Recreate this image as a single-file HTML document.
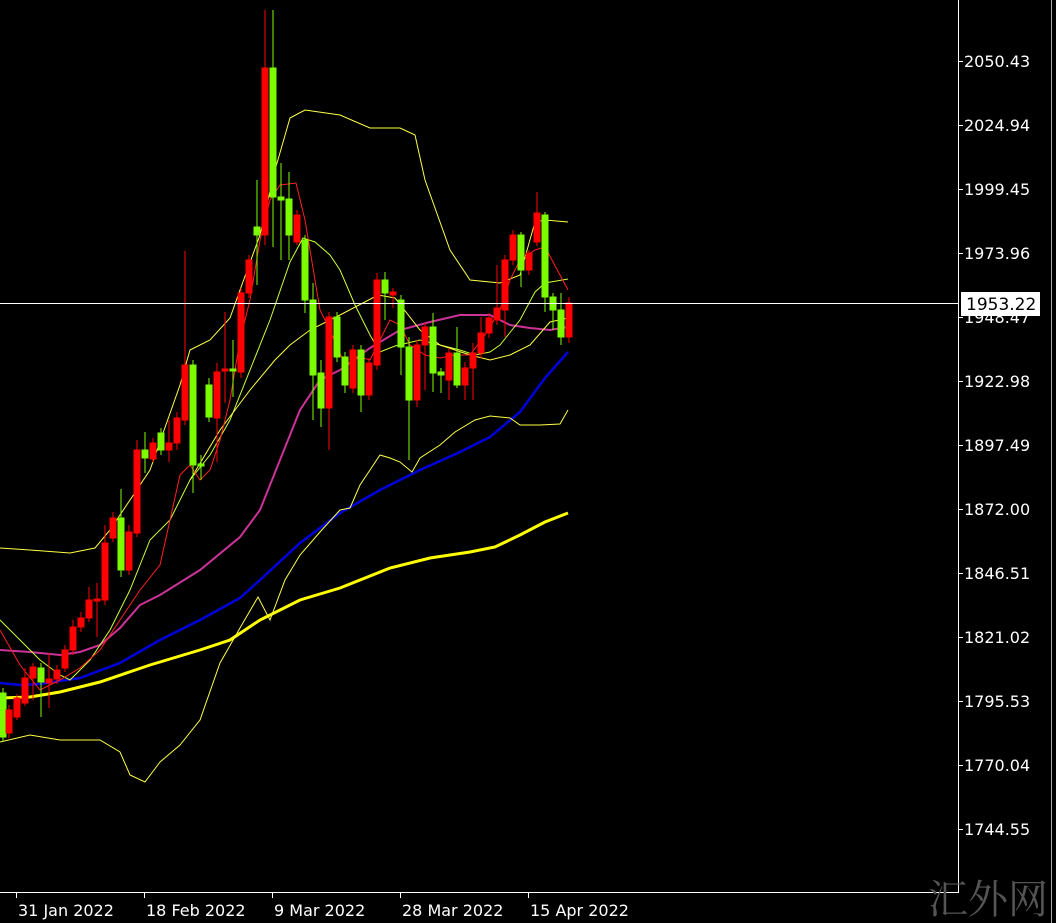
<!DOCTYPE html>
<html><head><meta charset="utf-8"><style>
html,body{margin:0;padding:0;background:#000;width:1056px;height:923px;overflow:hidden}
svg{display:block}
.t{font-family:"DejaVu Sans","Liberation Sans",sans-serif;font-size:16px;fill:#fff}
</style></head><body>
<svg width="1056" height="923" viewBox="0 0 1056 923" xmlns="http://www.w3.org/2000/svg">
<rect width="1056" height="923" fill="#000"/>
<!-- lines -->
<polyline fill="none" stroke="#ffff00" stroke-width="3" points="0,698 30,697 60,692 100,682 150,665 200,650 230,640 260,620 300,600 340,588 390,568 430,558 470,552 495,547 520,535 545,522 568,513"/>
<polyline fill="none" stroke="#0000dd" stroke-width="2.5" points="0,683 20,685 40,684 80,678 120,663 160,640 200,620 240,598 260,580 300,543 340,513 380,490 420,470 460,452 490,437 520,412 545,378 568,352"/>
<polyline fill="none" stroke="#cc3399" stroke-width="2" points="0,650 30,652 60,655 80,652 100,645 120,628 140,605 160,595 200,570 240,537 260,510 280,460 300,410 320,380 340,370 370,348 400,330 430,322 460,315 490,315 510,325 530,328 550,330 568,327"/>
<polyline fill="none" stroke="#ffff44" stroke-width="1" points="0,548 30,550 70,553 95,548 110,530 150,470 180,385 190,350 210,340 230,318 240,290 260,235 275,170 290,118 305,110 340,115 370,128 400,128 415,135 425,180 450,250 470,280 500,283 520,275 535,222 545,220 568,222"/>
<polyline fill="none" stroke="#ffff44" stroke-width="1" points="0,742 30,735 60,740 100,740 120,752 130,775 145,782 160,762 180,745 200,720 220,663 240,628 258,597 270,620 285,580 300,555 320,532 340,510 350,508 360,485 370,470 380,455 390,458 400,462 412,472 420,458 440,445 455,432 475,420 490,416 510,418 520,425 540,425 560,424 568,410"/>
<polyline fill="none" stroke="#ccff33" stroke-width="1" points="0,620 20,640 40,660 60,675 70,680 90,660 110,630 130,590 150,540 170,520 190,480 210,455 230,420 250,370 270,320 290,262 303,238 315,242 330,255 340,270 355,305 370,335 380,352 395,346 420,340 440,345 460,350 475,355 490,352 500,345 520,320 535,292 545,283 568,279"/>
<polyline fill="none" stroke="#ffff44" stroke-width="1" points="190,480 220,430 250,390 275,360 290,345 310,330 340,315 378,295 395,298 420,330 440,345 470,355 490,360 510,355 530,345 550,322 568,318"/>
<polyline fill="none" stroke="#ff2020" stroke-width="1" points="0,630 20,665 40,690 60,680 80,668 100,650 120,620 140,590 160,565 180,475 190,465 200,480 210,470 220,440 230,400 240,340 250,300 260,240 270,200 280,185 296,183 305,220 320,310 330,330 345,365 360,357 370,360 380,340 390,320 400,325 410,345 425,355 440,358 455,355 470,355 485,335 500,310 510,280 520,260 535,250 545,247 560,275 568,290"/>
<!-- candles -->
<g id="c" stroke-width="1">
<g stroke="#7cfc00" fill="#7cfc00"><line x1="3" y1="688" x2="3" y2="742"/><rect x="0" y="693" width="6" height="44"/></g>
<g stroke="#ff0000" fill="#ff0000"><line x1="9" y1="705" x2="9" y2="738"/><rect x="6" y="710" width="6" height="23"/></g>
<g stroke="#ff0000" fill="#ff0000"><line x1="17" y1="694" x2="17" y2="720"/><rect x="14" y="698" width="6" height="19"/></g>
<g stroke="#ff0000" fill="#ff0000"><line x1="25" y1="668" x2="25" y2="706"/><rect x="22" y="678" width="6" height="25"/></g>
<g stroke="#ff0000" fill="#ff0000"><line x1="33" y1="663" x2="33" y2="700"/><rect x="30" y="667" width="6" height="11"/></g>
<g stroke="#7cfc00" fill="#7cfc00"><line x1="41" y1="663" x2="41" y2="717"/><rect x="38" y="668" width="6" height="14"/></g>
<g stroke="#ff0000" fill="#ff0000"><line x1="49" y1="653" x2="49" y2="708"/><rect x="46" y="679" width="6" height="4"/></g>
<g stroke="#ff0000" fill="#ff0000"><line x1="57" y1="665" x2="57" y2="684"/><rect x="54" y="670" width="6" height="9"/></g>
<g stroke="#ff0000" fill="#ff0000"><line x1="65" y1="645" x2="65" y2="672"/><rect x="62" y="650" width="6" height="18"/></g>
<g stroke="#ff0000" fill="#ff0000"><line x1="73" y1="620" x2="73" y2="655"/><rect x="70" y="627" width="6" height="23"/></g>
<g stroke="#ff0000" fill="#ff0000"><line x1="81" y1="612" x2="81" y2="632"/><rect x="78" y="618" width="6" height="9"/></g>
<g stroke="#ff0000" fill="#ff0000"><line x1="89" y1="587" x2="89" y2="622"/><rect x="86" y="600" width="6" height="18"/></g>
<g stroke="#ff0000" fill="#ff0000"><line x1="97" y1="583" x2="97" y2="637"/><rect x="94" y="599" width="6" height="2"/></g>
<g stroke="#ff0000" fill="#ff0000"><line x1="105" y1="525" x2="105" y2="605"/><rect x="102" y="543" width="6" height="57"/></g>
<g stroke="#ff0000" fill="#ff0000"><line x1="113" y1="512" x2="113" y2="542"/><rect x="110" y="518" width="6" height="20"/></g>
<g stroke="#7cfc00" fill="#7cfc00"><line x1="121" y1="489" x2="121" y2="577"/><rect x="118" y="518" width="6" height="52"/></g>
<g stroke="#ff0000" fill="#ff0000"><line x1="129" y1="525" x2="129" y2="575"/><rect x="126" y="532" width="6" height="38"/></g>
<g stroke="#ff0000" fill="#ff0000"><line x1="137" y1="440" x2="137" y2="537"/><rect x="134" y="450" width="6" height="83"/></g>
<g stroke="#7cfc00" fill="#7cfc00"><line x1="145" y1="432" x2="145" y2="473"/><rect x="142" y="450" width="6" height="8"/></g>
<g stroke="#ff0000" fill="#ff0000"><line x1="153" y1="438" x2="153" y2="462"/><rect x="150" y="443" width="6" height="16"/></g>
<g stroke="#7cfc00" fill="#7cfc00"><line x1="161" y1="428" x2="161" y2="455"/><rect x="158" y="433" width="6" height="17"/></g>
<g stroke="#ff0000" fill="#ff0000"><line x1="169" y1="420" x2="169" y2="462"/><rect x="166" y="443" width="6" height="7"/></g>
<g stroke="#ff0000" fill="#ff0000"><line x1="177" y1="412" x2="177" y2="450"/><rect x="174" y="418" width="6" height="25"/></g>
<g stroke="#ff0000" fill="#ff0000"><line x1="185" y1="251" x2="185" y2="425"/><rect x="182" y="365" width="6" height="55"/></g>
<g stroke="#7cfc00" fill="#7cfc00"><line x1="193" y1="360" x2="193" y2="493"/><rect x="190" y="365" width="6" height="100"/></g>
<g stroke="#7cfc00" fill="#7cfc00"><line x1="201" y1="455" x2="201" y2="480"/><rect x="198" y="464" width="6" height="2"/></g>
<g stroke="#7cfc00" fill="#7cfc00"><line x1="209" y1="378" x2="209" y2="422"/><rect x="206" y="385" width="6" height="32"/></g>
<g stroke="#ff0000" fill="#ff0000"><line x1="217" y1="363" x2="217" y2="462"/><rect x="214" y="372" width="6" height="46"/></g>
<g stroke="#ff0000" fill="#ff0000"><line x1="225" y1="312" x2="225" y2="403"/><rect x="222" y="369" width="6" height="2"/></g>
<g stroke="#7cfc00" fill="#7cfc00"><line x1="233" y1="340" x2="233" y2="397"/><rect x="230" y="369" width="6" height="2"/></g>
<g stroke="#ff0000" fill="#ff0000"><line x1="241" y1="288" x2="241" y2="378"/><rect x="238" y="293" width="6" height="79"/></g>
<g stroke="#ff0000" fill="#ff0000"><line x1="249" y1="255" x2="249" y2="298"/><rect x="246" y="260" width="6" height="33"/></g>
<g stroke="#7cfc00" fill="#7cfc00"><line x1="257" y1="180" x2="257" y2="285"/><rect x="254" y="227" width="6" height="8"/></g>
<g stroke="#ff0000" fill="#ff0000"><line x1="265" y1="10" x2="265" y2="245"/><rect x="262" y="68" width="6" height="167"/></g>
<g stroke="#7cfc00" fill="#7cfc00"><line x1="273" y1="10" x2="273" y2="247"/><rect x="270" y="68" width="6" height="129"/></g>
<g stroke="#7cfc00" fill="#7cfc00"><line x1="281" y1="163" x2="281" y2="260"/><rect x="278" y="197" width="6" height="3"/></g>
<g stroke="#7cfc00" fill="#7cfc00"><line x1="289" y1="172" x2="289" y2="260"/><rect x="286" y="199" width="6" height="36"/></g>
<g stroke="#ff0000" fill="#ff0000"><line x1="297" y1="210" x2="297" y2="245"/><rect x="294" y="215" width="6" height="27"/></g>
<g stroke="#7cfc00" fill="#7cfc00"><line x1="305" y1="235" x2="305" y2="313"/><rect x="302" y="240" width="6" height="60"/></g>
<g stroke="#7cfc00" fill="#7cfc00"><line x1="313" y1="283" x2="313" y2="420"/><rect x="310" y="300" width="6" height="75"/></g>
<g stroke="#7cfc00" fill="#7cfc00"><line x1="321" y1="360" x2="321" y2="427"/><rect x="318" y="373" width="6" height="35"/></g>
<g stroke="#ff0000" fill="#ff0000"><line x1="329" y1="312" x2="329" y2="450"/><rect x="326" y="317" width="6" height="91"/></g>
<g stroke="#7cfc00" fill="#7cfc00"><line x1="337" y1="312" x2="337" y2="362"/><rect x="334" y="317" width="6" height="40"/></g>
<g stroke="#7cfc00" fill="#7cfc00"><line x1="345" y1="352" x2="345" y2="393"/><rect x="342" y="357" width="6" height="28"/></g>
<g stroke="#ff0000" fill="#ff0000"><line x1="353" y1="345" x2="353" y2="393"/><rect x="350" y="350" width="6" height="38"/></g>
<g stroke="#7cfc00" fill="#7cfc00"><line x1="361" y1="345" x2="361" y2="412"/><rect x="358" y="350" width="6" height="45"/></g>
<g stroke="#ff0000" fill="#ff0000"><line x1="369" y1="358" x2="369" y2="400"/><rect x="366" y="363" width="6" height="32"/></g>
<g stroke="#ff0000" fill="#ff0000"><line x1="377" y1="273" x2="377" y2="370"/><rect x="374" y="280" width="6" height="85"/></g>
<g stroke="#7cfc00" fill="#7cfc00"><line x1="385" y1="272" x2="385" y2="320"/><rect x="382" y="280" width="6" height="13"/></g>
<g stroke="#ff0000" fill="#ff0000"><line x1="393" y1="288" x2="393" y2="308"/><rect x="390" y="292" width="6" height="3"/></g>
<g stroke="#7cfc00" fill="#7cfc00"><line x1="401" y1="295" x2="401" y2="375"/><rect x="398" y="300" width="6" height="47"/></g>
<g stroke="#7cfc00" fill="#7cfc00"><line x1="409" y1="337" x2="409" y2="460"/><rect x="406" y="347" width="6" height="53"/></g>
<g stroke="#ff0000" fill="#ff0000"><line x1="417" y1="340" x2="417" y2="407"/><rect x="414" y="345" width="6" height="55"/></g>
<g stroke="#ff0000" fill="#ff0000"><line x1="425" y1="322" x2="425" y2="390"/><rect x="422" y="327" width="6" height="18"/></g>
<g stroke="#7cfc00" fill="#7cfc00"><line x1="433" y1="313" x2="433" y2="392"/><rect x="430" y="327" width="6" height="46"/></g>
<g stroke="#7cfc00" fill="#7cfc00"><line x1="441" y1="368" x2="441" y2="393"/><rect x="438" y="372" width="6" height="3"/></g>
<g stroke="#ff0000" fill="#ff0000"><line x1="449" y1="348" x2="449" y2="400"/><rect x="446" y="353" width="6" height="27"/></g>
<g stroke="#7cfc00" fill="#7cfc00"><line x1="457" y1="327" x2="457" y2="388"/><rect x="454" y="353" width="6" height="32"/></g>
<g stroke="#ff0000" fill="#ff0000"><line x1="465" y1="362" x2="465" y2="400"/><rect x="462" y="368" width="6" height="17"/></g>
<g stroke="#ff0000" fill="#ff0000"><line x1="473" y1="343" x2="473" y2="400"/><rect x="470" y="353" width="6" height="15"/></g>
<g stroke="#ff0000" fill="#ff0000"><line x1="481" y1="317" x2="481" y2="358"/><rect x="478" y="333" width="6" height="20"/></g>
<g stroke="#ff0000" fill="#ff0000"><line x1="489" y1="313" x2="489" y2="338"/><rect x="486" y="318" width="6" height="15"/></g>
<g stroke="#ff0000" fill="#ff0000"><line x1="497" y1="265" x2="497" y2="325"/><rect x="494" y="308" width="6" height="12"/></g>
<g stroke="#ff0000" fill="#ff0000"><line x1="505" y1="255" x2="505" y2="337"/><rect x="502" y="260" width="6" height="50"/></g>
<g stroke="#ff0000" fill="#ff0000"><line x1="513" y1="230" x2="513" y2="265"/><rect x="510" y="235" width="6" height="25"/></g>
<g stroke="#7cfc00" fill="#7cfc00"><line x1="521" y1="232" x2="521" y2="287"/><rect x="518" y="235" width="6" height="35"/></g>
<g stroke="#ff0000" fill="#ff0000"><line x1="529" y1="250" x2="529" y2="275"/><rect x="526" y="253" width="6" height="17"/></g>
<g stroke="#ff0000" fill="#ff0000"><line x1="537" y1="192" x2="537" y2="246"/><rect x="534" y="213" width="6" height="29"/></g>
<g stroke="#7cfc00" fill="#7cfc00"><line x1="545" y1="212" x2="545" y2="312"/><rect x="542" y="215" width="6" height="82"/></g>
<g stroke="#7cfc00" fill="#7cfc00"><line x1="553" y1="293" x2="553" y2="330"/><rect x="550" y="297" width="6" height="13"/></g>
<g stroke="#7cfc00" fill="#7cfc00"><line x1="561" y1="293" x2="561" y2="345"/><rect x="558" y="310" width="6" height="27"/></g>
<g stroke="#ff0000" fill="#ff0000"><line x1="569" y1="297" x2="569" y2="343"/><rect x="566" y="303" width="6" height="34"/></g>
</g>
<!-- current price line -->
<line x1="0" y1="303.5" x2="958" y2="303.5" stroke="#fff" stroke-width="1"/>
<!-- axes -->
<line x1="958.5" y1="0" x2="958.5" y2="893" stroke="#fff" stroke-width="1"/>
<line x1="0" y1="892.5" x2="958" y2="892.5" stroke="#fff" stroke-width="1"/>
<line x1="1051.5" y1="0" x2="1051.5" y2="923" stroke="#aaa" stroke-width="1"/>
<g stroke="#fff">
<line x1="958" y1="61.5" x2="963" y2="61.5"/><line x1="958" y1="125.5" x2="963" y2="125.5"/><line x1="958" y1="189.5" x2="963" y2="189.5"/><line x1="958" y1="253.5" x2="963" y2="253.5"/><line x1="958" y1="317.5" x2="963" y2="317.5"/><line x1="958" y1="381.5" x2="963" y2="381.5"/><line x1="958" y1="445.5" x2="963" y2="445.5"/><line x1="958" y1="509.5" x2="963" y2="509.5"/><line x1="958" y1="573.5" x2="963" y2="573.5"/><line x1="958" y1="637.5" x2="963" y2="637.5"/><line x1="958" y1="701.5" x2="963" y2="701.5"/><line x1="958" y1="765.5" x2="963" y2="765.5"/><line x1="958" y1="829.5" x2="963" y2="829.5"/>
<line x1="16.5" y1="892" x2="16.5" y2="898"/><line x1="144.5" y1="892" x2="144.5" y2="898"/><line x1="272.5" y1="892" x2="272.5" y2="898"/><line x1="400.5" y1="892" x2="400.5" y2="898"/><line x1="528.5" y1="892" x2="528.5" y2="898"/>
</g>
<g class="t">
<text x="964" y="67">2050.43</text><text x="964" y="131">2024.94</text><text x="964" y="195">1999.45</text><text x="964" y="259">1973.96</text><text x="964" y="323">1948.47</text><text x="964" y="387">1922.98</text><text x="964" y="451">1897.49</text><text x="964" y="515">1872.00</text><text x="964" y="579">1846.51</text><text x="964" y="643">1821.02</text><text x="964" y="707">1795.53</text><text x="964" y="771">1770.04</text><text x="964" y="835">1744.55</text>
<text x="18" y="916">31 Jan 2022</text><text x="146" y="916">18 Feb 2022</text><text x="274" y="916">9 Mar 2022</text><text x="402" y="916">28 Mar 2022</text><text x="530" y="916">15 Apr 2022</text>
</g>
<rect x="961" y="292" width="79" height="24" fill="#fff"/>
<text x="966" y="310" style="font-family:'DejaVu Sans','Liberation Sans',sans-serif;font-size:17px" fill="#000">1953.22</text>
<text x="928" y="913" style="font-family:'Noto Serif CJK SC','Noto Sans CJK SC',serif;font-size:40px" fill="#555">汇外网</text>
</svg>
</body></html>
